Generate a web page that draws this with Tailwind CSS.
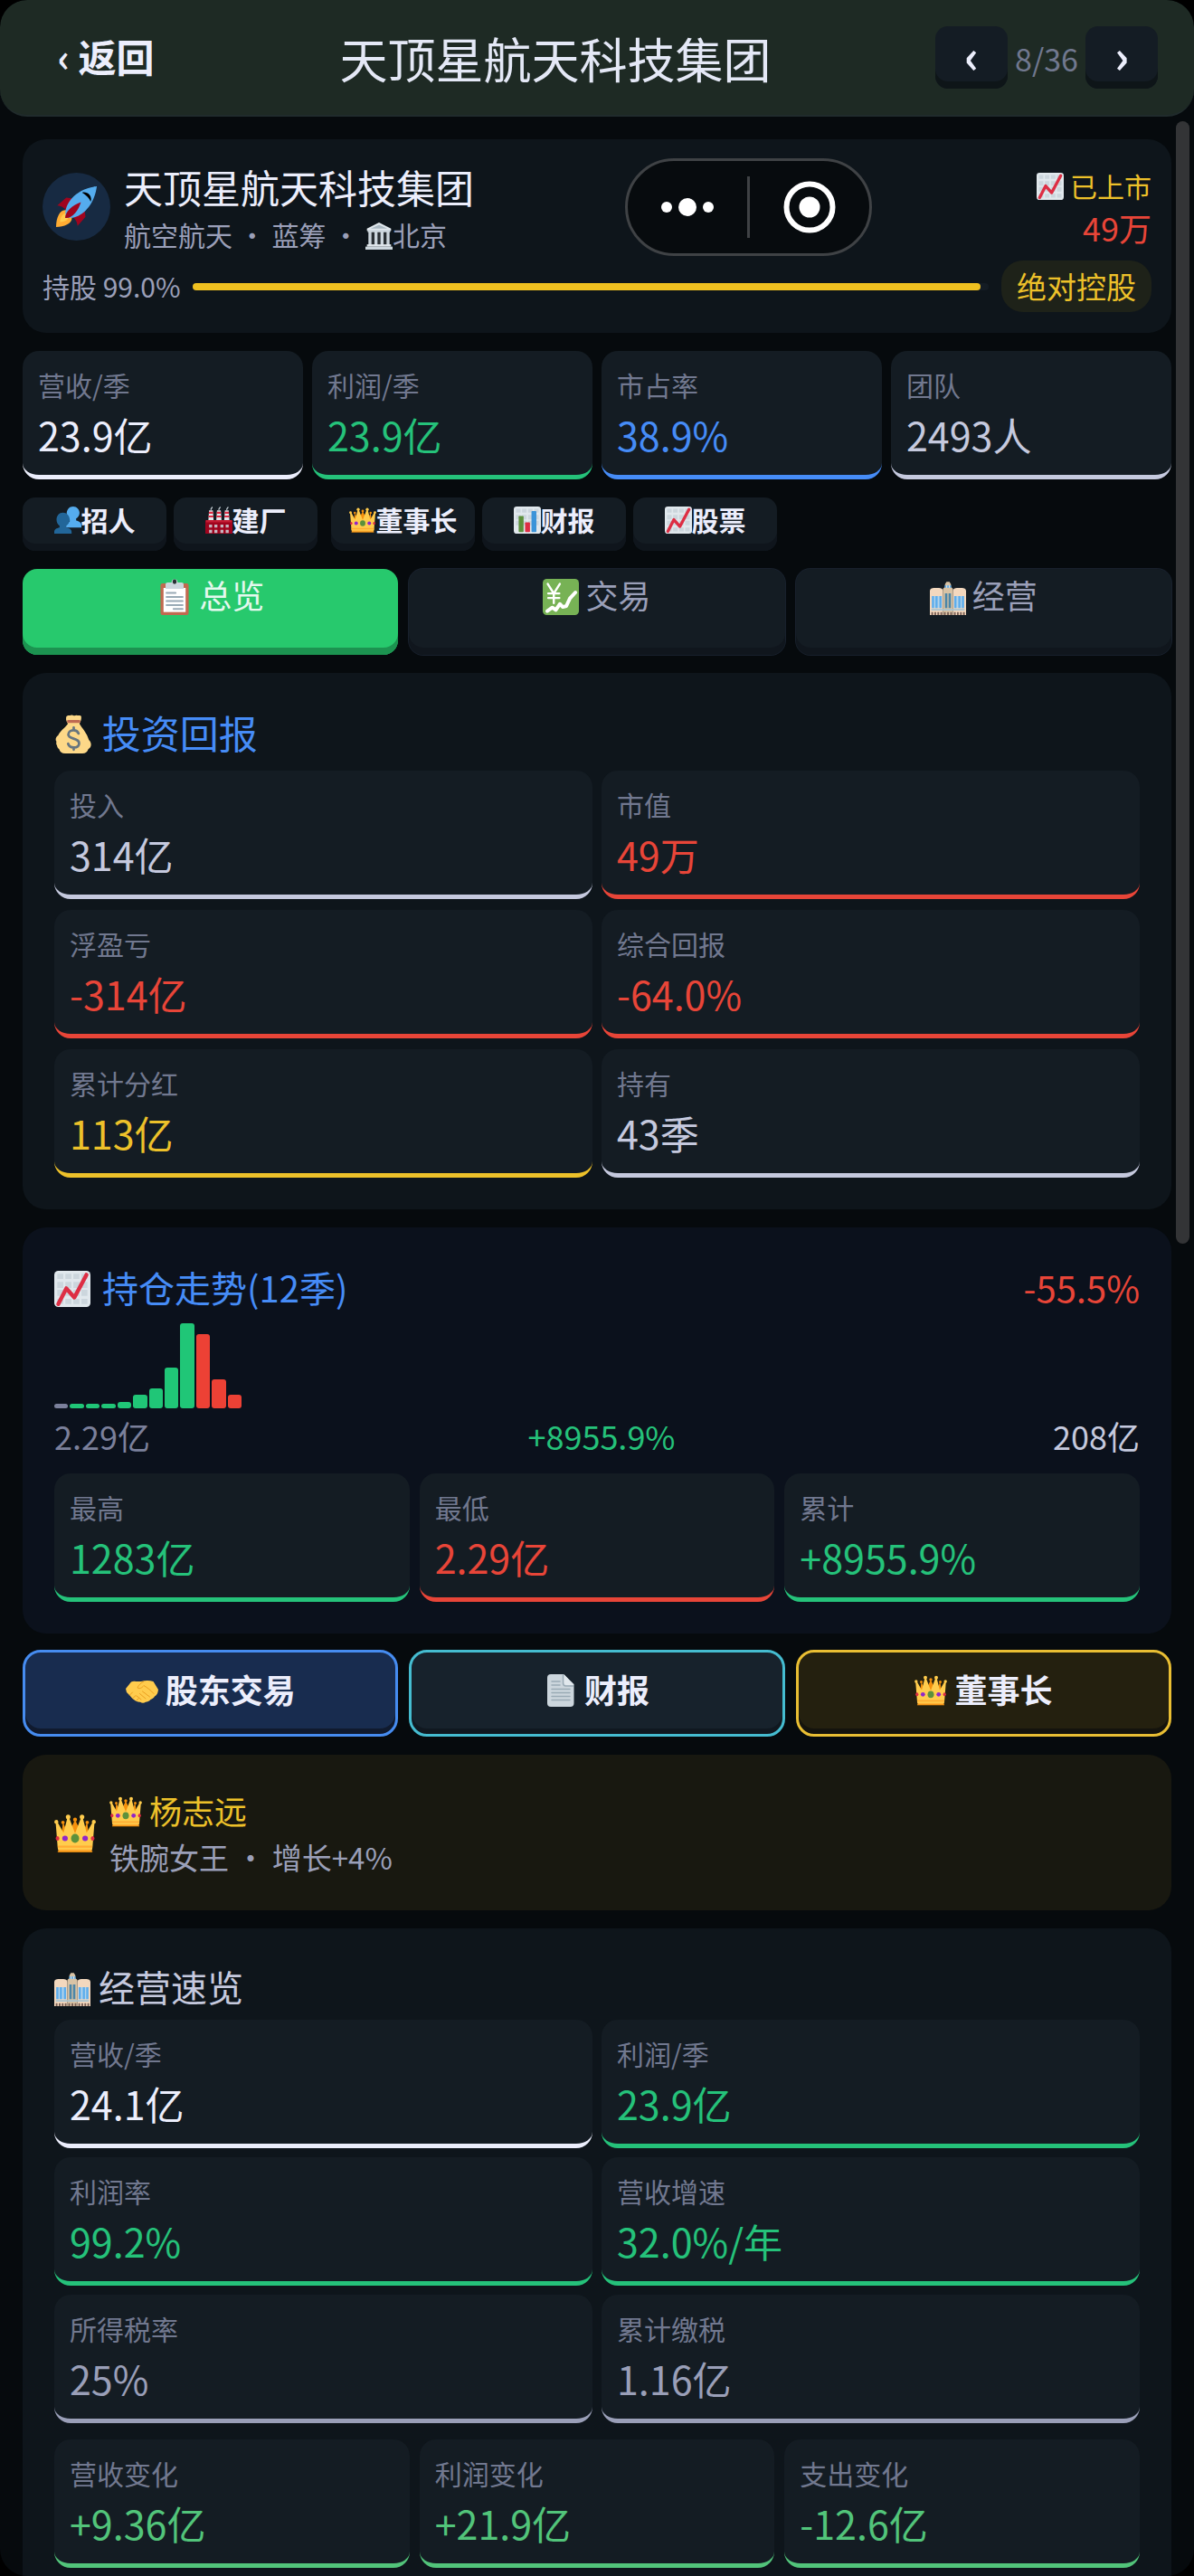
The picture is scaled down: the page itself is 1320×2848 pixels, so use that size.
<!DOCTYPE html>
<html lang="zh-CN">
<head>
  <meta charset="UTF-8">
  <meta name="viewport" content="width=device-width, initial-scale=1.0">
  <title>天顶星航天科技集团</title>
  <script src="https://cdn.jsdelivr.net/npm/@tailwindcss/browser@4"></script>
</head>
<body class="bg-black font-['Noto_Sans_CJK_SC',sans-serif] text-[#eceefc]">

  <!-- Icon sprite -->
  <svg class="hidden" aria-hidden="true">
    <symbol id="i-rocket" viewBox="0 0 36 36">
      <path fill="#A0041E" d="M1 17l8-7 8 1s1.500 3 .5 6c-1 3-6.500 7-8 5s-3.500-4.500-8.500-5zM19 35l7-8-1-8s-3-1.500-6-.5c-3 1-7 6.500-5 8s4.500 3.500 5 8.500z"/>
      <path fill="#FFAC33" d="M8 21c-5 0-8 7-8 15 7 0 14-3 14-8 0-4-2-7-6-7z"/>
      <path fill="#FFCC4D" d="M8.500 24c-2.500 0-5 3.500-5 7.500 3.500 0 7.500-1.500 7.500-4.500 0-2-1-3-2.500-3z"/>
      <path fill="#55ACEE" d="M36 0S23 1 14.500 10C10 15 7.500 20.500 8.500 25.500c.2 1 1 1.800 2 2C16 28.500 21 26 26 21.500 35 13 36 0 36 0z"/>
      <path fill="#000" d="M23 5.500c2-.8 5 .3 6.500 1.800S31.500 12 30.500 13.500C30 11 25.500 6.500 23 5.500z"/>
      <path fill="#A0041E" d="M8 28c0-5 6-11.500 14-14 -2 7-8 15-14 14z"/>
    </symbol>
    <symbol id="i-chart" viewBox="0 0 36 36">
      <rect width="36" height="36" rx="4" fill="#E1E8ED"/>
      <path fill="#CCD6DD" d="M3 3h6v5H3zM11 3h6v5h-6zM19 3h6v5h-6zM27 3h6v5h-6zM3 11h6v6H3zM11 11h6v6h-6zM19 11h6v6h-6zM27 11h6v6h-6zM3 19h6v6H3zM11 19h6v6h-6zM19 19h6v6h-6zM27 19h6v6h-6zM3 28h6v5H3zM11 28h6v5h-6zM19 28h6v5h-6zM27 28h6v5h-6z"/>
      <path fill="none" stroke="#DD2E44" stroke-width="4" stroke-linecap="round" stroke-linejoin="round" d="M4 33l8-15.500 8 9L32 4"/>
    </symbol>
    <symbol id="i-bars" viewBox="0 0 36 36">
      <rect width="36" height="36" rx="4" fill="#E1E8ED"/>
      <path fill="#CCD6DD" d="M3 3h6v5H3zM11 3h6v5h-6zM19 3h6v5h-6zM27 3h6v5h-6zM3 11h6v6H3zM11 11h6v6h-6zM19 11h6v6h-6zM27 11h6v6h-6zM3 19h6v6H3zM11 19h6v6h-6zM19 19h6v6h-6zM27 19h6v6h-6z"/>
      <rect x="6.500" y="12.500" width="6.500" height="21.500" rx="1" fill="#5C913B"/>
      <rect x="15" y="21" width="6.500" height="13" rx="1" fill="#DD2E44"/>
      <rect x="23.500" y="6" width="6.500" height="28" rx="1" fill="#3B94D9"/>
    </symbol>
    <symbol id="i-bank" viewBox="0 0 36 36">
      <path fill="#E1E8ED" d="M18 0l16 8v3H2V8z"/>
      <path fill="#AAB8C2" d="M18 3l11 5H7z"/>
      <path fill="#292F33" d="M4 11h28v19H4z"/>
      <path fill="#CCD6DD" d="M3 10h30v3H3zM4 13h4v17H4zM12 13h4v17h-4zM20 13h4v17h-4zM28 13h4v17h-4z"/>
      <path fill="#E1E8ED" d="M2 29h32v3H2z"/>
      <path fill="#CCD6DD" d="M0 32h36v4H0z"/>
    </symbol>
    <symbol id="i-people" viewBox="0 0 36 36">
      <path fill="#55ACEE" d="M25 0c-5 0-8.500 4-8.500 9.500 0 3.500 1.500 6.500 4 8v2.500c-3 1-5.500 2-5.500 5.500V28h21v-3c0-4-3-5.500-7-6.500v-2.500c2.500-1.500 4.500-4 4.500-7.500C33.500 4 30 0 25 0z"/>
      <path fill="#226699" d="M11.500 8C6.500 8 3 12 3 17.500c0 3.500 1.500 6.500 4 8V28c-4 1-7 2-7 6v2h23v-2c0-4-3-5-7-6v-2.500c2.500-1.500 4.500-4.500 4.500-8C20.500 12 16.500 8 11.500 8z"/>
    </symbol>
    <symbol id="i-factory" viewBox="0 0 36 36">
      <path fill="#E1E8ED" d="M5 5h5l1 14H4zM15.500 5h5l1 14h-7zM26 5h5l1 14h-7z"/>
      <path fill="#DD2E44" d="M4.800 7h5.400l.2 2.500H4.600zM15.300 7h5.400l.2 2.500h-5.800zM25.800 7h5.400l.2 2.500h-5.800zM4.400 12h6.200l.2 2.500H4.200zM14.900 12h6.200l.2 2.500h-6.600zM25.400 12h6.200l.2 2.500h-6.600z"/>
      <path fill="none" stroke="#CCD6DD" stroke-width="1.500" stroke-linecap="round" d="M7.500 4c0-2 1-1 1.500-3M18 4c0-2 1-1 1.500-3M28.500 4c0-2 1-1 1.500-3"/>
      <rect y="18" width="36" height="18" rx="1" fill="#A0041E"/>
      <path fill="#DD2E44" d="M1 18h34v3H1z" opacity=".6"/>
      <path fill="#CCD6DD" d="M5 24h4v4H5zM12 24h4v4h-4zM20 24h4v4h-4zM27 24h4v4h-4zM5 31h4v4H5zM12 31h4v4h-4zM20 31h4v4h-4zM27 31h4v4h-4z" opacity=".85"/>
    </symbol>
    <symbol id="i-crown" viewBox="0 0 36 36">
      <path fill="#F4900C" d="M6 22L7.500 8 12 19 18 6l6 13 4.500-11L30 22z"/>
      <circle cx="7.500" cy="8.500" r="1.500" fill="#F4900C"/><circle cx="18" cy="6" r="1.700" fill="#F4900C"/><circle cx="28.500" cy="8.500" r="1.500" fill="#F4900C"/>
      <path fill="#FFCC4D" d="M3 31L1.200 8.500l1.600-.3L8 17.500 11.500 4h1.200L18 18 23.300 4h1.200L28 17.500l5.200-9.300 1.600.3L33 31z"/>
      <circle cx="1.800" cy="8" r="1.700" fill="#FFCC4D"/><circle cx="12" cy="3.800" r="2" fill="#FFCC4D"/><circle cx="24" cy="3.800" r="2" fill="#FFCC4D"/><circle cx="34.200" cy="8" r="1.700" fill="#FFCC4D"/>
      <path fill="#FFAC33" d="M3 28.500h30l-.6 5.500H3.600z"/>
      <path fill="#FFCC4D" d="M3.200 30.300h29.600v1.600H3.200z"/>
      <path fill="#F4900C" d="M3 33.300h30v1H3z"/>
      <ellipse cx="18" cy="22.300" rx="3.500" ry="3.900" fill="#5C913B"/>
      <circle cx="9.300" cy="22.300" r="2.400" fill="#9126C9"/><circle cx="26.700" cy="22.300" r="2.400" fill="#9126C9"/>
      <ellipse cx="2.800" cy="22.300" rx="1.600" ry="2" fill="#DD2E44"/><ellipse cx="33.200" cy="22.300" rx="1.600" ry="2" fill="#DD2E44"/>
    </symbol>
    <symbol id="i-clipboard" viewBox="0 0 36 36">
      <rect x="4" y="4.500" width="28" height="31.500" rx="2" fill="#C1694F"/>
      <path fill="#fff" d="M7 9h22v24H7z"/>
      <path fill="#CCD6DD" d="M11 3.500h4a3 3 0 016 0h4a2 2 0 012 2V10H9V5.500a2 2 0 012-2z"/>
      <ellipse cx="18" cy="2.800" rx="2" ry="2.300" fill="#292F33"/>
      <path stroke="#99AAB5" stroke-width="1.800" stroke-linecap="round" d="M10 14h9M10 18h16M10 22h16M10 26h16M17 30h9"/>
    </symbol>
    <symbol id="i-yen" viewBox="0 0 36 36">
      <rect width="36" height="36" rx="4" fill="#77B255"/>
      <g fill="none" stroke="#fff" stroke-linecap="round" stroke-linejoin="round">
        <path stroke-width="2.200" d="M5 5l6 9.500L17 5M11 14.500V24M5.500 14.500h11M5.500 19h11"/>
        <path stroke-width="3.600" d="M4.500 32l5-3.500 3.500 2.500 4-6 3 3 3.500-1L27 19.500l5.500-6"/>
      </g>
    </symbol>
    <symbol id="i-building" viewBox="0 0 36 36">
      <path fill="#F3D8BE" d="M0 12c0-2 2-3 4-3h5c2 0 4 1 4 3v24H0zM23 12c0-2 2-3 4-3h5c2 0 4 1 4 3v24H23z"/>
      <path fill="#D9C3A5" d="M13 10l2-2V5.500L16.500 3h3L21 5.500V8l2 2v26H13z"/>
      <path fill="#5DADEC" d="M14.800 6.500h6.400V8.800h-6.400z"/>
      <path fill="#F3E7DA" d="M16.300 6.500h.9v2.300h-.9zM18.900 6.500h.9v2.300h-.9z"/>
      <path fill="#B5D4EA" d="M2 17h10v12H2zM24 17h10v12H24z"/>
      <path fill="#5DADEC" d="M2 17h2.200v12H2zM5.500 17h2.200v12H5.500zM9.500 17h2.200v12H9.500zM24.300 17h2.200v12h-2.200zM28.300 17h2.200v12h-2.200zM31.800 17H34v12h-2.200z"/>
      <path fill="#4C86A8" d="M15 14.500h2.400V29H15zM18.600 14.500H21V29h-2.400z"/>
      <path fill="#A9C3CF" d="M1.500 30h33v1.500h-33z"/>
      <path fill="#7A5F55" d="M1.500 33h1.700v3H1.500zM4.500 33h1.700v3H4.500zM7.500 33h1.700v3H7.500zM10.500 33h1.700v3h-1.700zM14 33h1.700v3H14zM17.200 33h1.700v3h-1.700zM20.300 33H22v3h-1.700zM24 33h1.700v3H24zM27 33h1.700v3H27zM30 33h1.700v3H30zM33 33h1.700v3H33z"/>
    </symbol>
    <symbol id="i-bag" viewBox="0 0 36 36">
      <path fill="#FDD888" d="M13 9c-1.500-2-2.500-4-2-6.500C11.500.5 13 1 14.500.8c1.200-.6 2-.6 3.200 0 1.400.6 2-.4 3.600 0 1.500.3 3-.4 3.700 1 .2 2.500-.5 5-2 7.200z"/>
      <path fill="#FDD888" d="M13 8h10c2.500 4.500 7.500 9.500 9 15.500 1.500 1 2.200 3.200 2 5-.3 1.800-1.500 3-2.500 3.500-.8 2.500-2.500 4-5.500 4H10c-3 0-4.800-1.500-5.500-4C3.500 31.500 2.500 30 2.500 28.500 1.500 28 2 25 2 25c-1.500-2 0-5 1.500-5.500C5 15.500 10.500 12 13 8z"/>
      <rect x="11.800" y="5" width="12.400" height="2.800" rx="1.200" fill="#BF6952"/>
      <path fill="none" stroke="#67757F" stroke-width="2.300" stroke-linecap="round" d="M22.500 17.500c-.8-2-2.500-3-4.500-3s-5 1.200-5 4c0 5 10 2.500 10 8 0 2.500-2 4-5 4s-4.500-1.300-5.200-3.500M18 12v2.500M18 30.500v2"/>
    </symbol>
    <symbol id="i-handshake" viewBox="0 0 36 36">
      <path fill="#FFCC4D" d="M0 16l6-7.500c3-1.500 6 0 11-.5 5-1.500 9-1.500 13.500 0L36 17c-.5 4-1.500 6-4 7.500-1 2-3 3-4.500 3.500-1.500 2-3.500 2.700-5.500 2.700-1.500 1.500-4.500 1.500-6 0C12 31.500 7 27 4.500 23.500L1 20z"/>
      <path fill="none" stroke="#E89A1C" stroke-width=".9" stroke-linecap="round" d="M20 8c-3 1.500-6 4-7 7 2.500 1.500 5 0 7-2.500 4 2.500 8 5.500 11 9M18.500 19l8 6M15.500 21.500l6.500 5.500M12 24l5 4M4.500 23l3-3M8 26.500l3-3M12 29l2.500-2.500"/>
    </symbol>
    <symbol id="i-page" viewBox="0 0 36 36">
      <path fill="#CCD6DD" d="M7 0h14l11.500 11v21a4 4 0 01-4 4H7a4 4 0 01-4-4V4a4 4 0 014-4z"/>
      <path fill="#E1E8ED" d="M21.500 0v9a3 3 0 003 3h8z"/>
      <path fill="none" stroke="#99AAB5" stroke-width="1.400" stroke-linecap="round" d="M20.500 1v9a3 3 0 003 3h8"/>
      <path stroke="#99AAB5" stroke-width="1.500" stroke-linecap="round" d="M8 8h9M8 12h9M8 16.500h20M8 20.500h20M8 24.500h20M8 28.500h20"/>
    </symbol>
  </svg>

  <div class="relative flex h-screen flex-col overflow-hidden rounded-[30px] bg-[#060a0d]">

    <!-- Header -->
    <header class="flex h-[129px] shrink-0 items-center rounded-[30px] border-b-2 border-[#202b2c] bg-[#1e2a24] px-10">
      <button class="w-[154px] pb-[5px] text-[42px] font-bold leading-[61px]">‹ 返回</button>
      <h1 class="flex-1 pt-[2px] text-center text-[53px] leading-[77px] text-[#e4e8f6]">天顶星航天科技集团</h1>
      <nav class="flex items-center gap-2">
        <button aria-label="上一家" class="h-[69px] w-20 rounded-[14px] bg-[#141c24] pb-2 text-[50px] font-bold leading-[61px] shadow-[inset_0_-8px_0_#0e1518]">‹</button>
        <span class="pt-[2px] text-[34px] leading-[50px] text-[#71788f]">8/36</span>
        <button aria-label="下一家" class="h-[69px] w-20 rounded-[14px] bg-[#141c24] pb-2 text-[50px] font-bold leading-[61px] shadow-[inset_0_-8px_0_#0e1518]">›</button>
      </nav>
    </header>

    <main class="flex flex-1 flex-col gap-5 px-[25px] pt-[25px]">

      <!-- Company card -->
      <section class="relative shrink-0 rounded-[26px] bg-[#0e151b] px-[22px] pb-[23px] pt-[22px]">
        <div class="flex items-center">
          <div class="flex size-[75px] items-center justify-center rounded-full bg-[#172a42]">
            <svg class="size-[45px]"><use href="#i-rocket"/></svg>
          </div>
          <div class="ml-[15px] flex-1">
            <h2 class="text-[43px] leading-[61px]">天顶星航天科技集团</h2>
            <p class="text-[30px] leading-[44px] text-[#9a9fb8]">航空航天 • 蓝筹 • <svg class="inline size-[1em] align-[-0.12em]"><use href="#i-bank"/></svg>北京</p>
          </div>
          <div class="text-right">
            <p class="text-[30px] leading-[44px] text-[#edc12a]"><svg class="inline size-[1em] align-[-0.12em]"><use href="#i-chart"/></svg> 已上市</p>
            <p class="text-[36px] leading-[48px] text-[#e84538]">49万</p>
          </div>
        </div>
        <div class="mt-[7px] flex items-center">
          <span class="text-[30px] leading-[43px] text-[#9a9fb8]">持股 99.0%</span>
          <div class="ml-[13px] mr-[14px] h-2 flex-1 rounded bg-[#141c24]">
            <div class="h-2 rounded bg-[#efc020]" style="width: 99%"></div>
          </div>
          <span class="rounded-[24px] bg-[#1e2219] px-[17px] text-[33px] leading-[57px] text-[#edc12a]">绝对控股</span>
        </div>

        <!-- Mini program capsule -->
        <div class="absolute left-[666px] top-[21px] flex h-[108px] w-[273px] items-center rounded-full border-3 border-[#3f4245] bg-[#070b0e]">
          <button aria-label="更多" class="flex flex-1 justify-center">
            <svg class="h-6 w-[60px]" viewBox="0 0 60 24" fill="#fff"><circle cx="7" cy="12" r="6"/><circle cx="30" cy="12" r="10"/><circle cx="53" cy="12" r="6"/></svg>
          </button>
          <div class="h-[68px] w-[3px] bg-[#3f4245]"></div>
          <button aria-label="关闭" class="flex flex-1 justify-center">
            <svg class="size-[58px]" viewBox="0 0 58 58"><circle cx="29" cy="29" r="25.500" fill="none" stroke="#fff" stroke-width="6"/><circle cx="29" cy="29" r="11.500" fill="#fff"/></svg>
          </button>
        </div>
      </section>

      <!-- Key figures -->
      <section class="grid shrink-0 grid-cols-4 gap-[10px]">
        <div class="rounded-[18px] border-b-5 border-[#eceefc] bg-[#141c23] px-[17px] pb-3 pt-4">
          <p class="text-[30px] leading-[43px] text-[#71788f]">营收/季</p>
          <p class="text-[43px] leading-[66px] text-[#eceefc]">23.9亿</p>
        </div>
        <div class="rounded-[18px] border-b-5 border-[#25c27a] bg-[#141c23] px-[17px] pb-3 pt-4">
          <p class="text-[30px] leading-[43px] text-[#71788f]">利润/季</p>
          <p class="text-[43px] leading-[66px] text-[#25c27a]">23.9亿</p>
        </div>
        <div class="rounded-[18px] border-b-5 border-[#468cf7] bg-[#141c23] px-[17px] pb-3 pt-4">
          <p class="text-[30px] leading-[43px] text-[#71788f]">市占率</p>
          <p class="text-[43px] leading-[66px] text-[#468cf7]">38.9%</p>
        </div>
        <div class="rounded-[18px] border-b-5 border-[#c5c9de] bg-[#141c23] px-[17px] pb-3 pt-4">
          <p class="text-[30px] leading-[43px] text-[#71788f]">团队</p>
          <p class="text-[43px] leading-[66px] text-[#c5c9de]">2493人</p>
        </div>
      </section>

      <!-- Quick actions -->
      <section class="flex shrink-0 gap-[15px]">
        <div class="flex gap-2">
          <button class="h-[59px] w-[159px] rounded-[14px] bg-[#141c23] pb-3 text-[30px] font-bold leading-[44px] shadow-[inset_0_-8px_0_#0f151c]"><svg class="inline size-[1em] align-[-0.12em]"><use href="#i-people"/></svg>招人</button>
          <button class="h-[59px] w-[159px] rounded-[14px] bg-[#141c23] pb-3 text-[30px] font-bold leading-[44px] shadow-[inset_0_-8px_0_#0f151c]"><svg class="inline size-[1em] align-[-0.12em]"><use href="#i-factory"/></svg>建厂</button>
        </div>
        <div class="flex gap-2">
          <button class="h-[59px] w-[159px] rounded-[14px] bg-[#141c23] pb-3 text-[30px] font-bold leading-[44px] shadow-[inset_0_-8px_0_#0f151c]"><svg class="inline size-[1em] align-[-0.12em]"><use href="#i-crown"/></svg>董事长</button>
          <button class="h-[59px] w-[159px] rounded-[14px] bg-[#141c23] pb-3 text-[30px] font-bold leading-[44px] shadow-[inset_0_-8px_0_#0f151c]"><svg class="inline size-[1em] align-[-0.12em]"><use href="#i-bars"/></svg>财报</button>
          <button class="h-[59px] w-[159px] rounded-[14px] bg-[#141c23] pb-3 text-[30px] font-bold leading-[44px] shadow-[inset_0_-8px_0_#0f151c]"><svg class="inline size-[1em] align-[-0.12em]"><use href="#i-chart"/></svg>股票</button>
        </div>
      </section>

      <!-- Tabs -->
      <div role="tablist" class="grid shrink-0 grid-cols-3 gap-3">
        <button role="tab" aria-selected="true" class="rounded-2xl bg-[#27c96d] pb-[44px] pt-2 text-[36px] leading-[40px] text-[#e4f8ee] shadow-[inset_0_-8px_0_#1c9350]"><svg class="mr-[7px] inline size-10 align-[-7px]"><use href="#i-clipboard"/></svg>总览</button>
        <button role="tab" aria-selected="false" class="rounded-2xl bg-[#141c23] pb-[44px] pt-2 text-[36px] leading-[40px] text-[#9a9fb8] shadow-[inset_0_-8px_0_#10161d] ring-1 ring-[#18202c]"><svg class="mr-[7px] inline size-10 align-[-7px]"><use href="#i-yen"/></svg>交易</button>
        <button role="tab" aria-selected="false" class="rounded-2xl bg-[#141c23] pb-[44px] pt-2 text-[36px] leading-[40px] text-[#9a9fb8] shadow-[inset_0_-8px_0_#10161d] ring-1 ring-[#18202c]"><svg class="mr-[7px] inline size-10 align-[-7px]"><use href="#i-building"/></svg>经营</button>
      </div>

      <!-- Return on investment -->
      <section class="shrink-0 rounded-[26px] bg-[#0e151b] p-[35px]">
        <h2 class="text-[43px] leading-[61px] text-[#468cf7]"><svg class="inline size-[1em] align-[-0.12em]"><use href="#i-bag"/></svg> 投资回报</h2>
        <div class="mt-3 grid grid-cols-2 gap-x-[10px] gap-y-3">
          <div class="rounded-[18px] border-b-5 border-[#c5c9de] bg-[#141c23] px-[17px] pb-3 pt-4">
            <p class="text-[30px] leading-[43px] text-[#71788f]">投入</p>
            <p class="text-[43px] leading-[66px] text-[#c5c9de]">314亿</p>
          </div>
          <div class="rounded-[18px] border-b-5 border-[#e84538] bg-[#141c23] px-[17px] pb-3 pt-4">
            <p class="text-[30px] leading-[43px] text-[#71788f]">市值</p>
            <p class="text-[43px] leading-[66px] text-[#e84538]">49万</p>
          </div>
          <div class="rounded-[18px] border-b-5 border-[#e84538] bg-[#141c23] px-[17px] pb-3 pt-4">
            <p class="text-[30px] leading-[43px] text-[#71788f]">浮盈亏</p>
            <p class="text-[43px] leading-[66px] text-[#e84538]">-314亿</p>
          </div>
          <div class="rounded-[18px] border-b-5 border-[#e84538] bg-[#141c23] px-[17px] pb-3 pt-4">
            <p class="text-[30px] leading-[43px] text-[#71788f]">综合回报</p>
            <p class="text-[43px] leading-[66px] text-[#e84538]">-64.0%</p>
          </div>
          <div class="rounded-[18px] border-b-5 border-[#edc12a] bg-[#141c23] px-[17px] pb-3 pt-4">
            <p class="text-[30px] leading-[43px] text-[#71788f]">累计分红</p>
            <p class="text-[43px] leading-[66px] text-[#edc12a]">113亿</p>
          </div>
          <div class="rounded-[18px] border-b-5 border-[#c5c9de] bg-[#141c23] px-[17px] pb-3 pt-4">
            <p class="text-[30px] leading-[43px] text-[#71788f]">持有</p>
            <p class="text-[43px] leading-[66px] text-[#c5c9de]">43季</p>
          </div>
        </div>
      </section>

      <!-- Holding trend -->
      <section class="shrink-0 rounded-[26px] bg-[#0b111c] p-[35px]">
        <div class="flex justify-between text-[40px] leading-[62px]">
          <h2 class="text-[#468cf7]"><svg class="mr-1 inline size-[1em] align-[-0.12em]"><use href="#i-chart"/></svg> 持仓走势(12季)</h2>
          <span class="text-[#e84538]">-55.5%</span>
        </div>
        <div class="mt-[9px] grid h-[94px] w-[207px] grid-cols-12 items-end gap-[2px]">
          <div class="rounded-[3px] bg-[#7b809b]" style="height: 5px"></div>
          <div class="rounded-[3px] bg-[#20c677]" style="height: 5px"></div>
          <div class="rounded-[3px] bg-[#20c677]" style="height: 5px"></div>
          <div class="rounded-[3px] bg-[#20c677]" style="height: 5px"></div>
          <div class="rounded-[3px] bg-[#20c677]" style="height: 7px"></div>
          <div class="rounded-[3px] bg-[#20c677]" style="height: 15px"></div>
          <div class="rounded-[3px] bg-[#20c677]" style="height: 22px"></div>
          <div class="rounded-[3px] bg-[#20c677]" style="height: 45px"></div>
          <div class="rounded-[3px] bg-[#20c677]" style="height: 94px"></div>
          <div class="rounded-[3px] bg-[#ed4135]" style="height: 82px"></div>
          <div class="rounded-[3px] bg-[#ed4135]" style="height: 32px"></div>
          <div class="rounded-[3px] bg-[#ed4135]" style="height: 15px"></div>
        </div>
        <div class="mt-1 flex justify-between text-[36px] leading-[52px]">
          <span class="text-[#7b809b]">2.29亿</span>
          <span class="text-[#25c27a]">+8955.9%</span>
          <span class="text-[#c5c9de]">208亿</span>
        </div>
        <div class="mt-4 grid grid-cols-3 gap-[11px]">
          <div class="rounded-[18px] border-b-5 border-[#25c27a] bg-[#141c23] px-[17px] pb-3 pt-4">
            <p class="text-[30px] leading-[43px] text-[#71788f]">最高</p>
            <p class="text-[43px] leading-[66px] text-[#25c27a]">1283亿</p>
          </div>
          <div class="rounded-[18px] border-b-5 border-[#e84538] bg-[#141c23] px-[17px] pb-3 pt-4">
            <p class="text-[30px] leading-[43px] text-[#71788f]">最低</p>
            <p class="text-[43px] leading-[66px] text-[#e84538]">2.29亿</p>
          </div>
          <div class="rounded-[18px] border-b-5 border-[#25c27a] bg-[#141c23] px-[17px] pb-3 pt-4">
            <p class="text-[30px] leading-[43px] text-[#71788f]">累计</p>
            <p class="text-[43px] leading-[66px] text-[#25c27a]">+8955.9%</p>
          </div>
        </div>
      </section>

      <!-- Main actions -->
      <section class="-mt-[2px] grid shrink-0 grid-cols-3 gap-3 text-[36px] font-bold leading-[52px]">
        <button class="h-24 rounded-[20px] border-3 border-[#468cf0] bg-[#182c4f] pb-[10px] shadow-[inset_0_-6px_0_#101a2e]"><svg class="inline size-[1em] align-[-0.12em]"><use href="#i-handshake"/></svg> 股东交易</button>
        <button class="h-24 rounded-[20px] border-3 border-[#45bcd0] bg-[#17222c] pb-[10px] shadow-[inset_0_-6px_0_#101820]"><svg class="inline size-[1em] align-[-0.12em]"><use href="#i-page"/></svg> 财报</button>
        <button class="h-24 rounded-[20px] border-3 border-[#e9be33] bg-[#24200f] pb-[10px] shadow-[inset_0_-6px_0_#14130d]"><svg class="inline size-[1em] align-[-0.12em]"><use href="#i-crown"/></svg> 董事长</button>
      </section>

      <!-- Chairman -->
      <section class="flex shrink-0 items-center gap-[15px] rounded-[26px] bg-[#181810] px-[35px] pb-[33px] pt-[35px]">
        <svg class="size-[46px]"><use href="#i-crown"/></svg>
        <div>
          <p class="text-[36px] leading-[52px] text-[#edc12a]"><svg class="inline size-[1em] align-[-0.12em]"><use href="#i-crown"/></svg> 杨志远</p>
          <p class="text-[33px] leading-[52px] text-[#9a9fb8]">铁腕女王 • 增长+4%</p>
        </div>
      </section>

      <!-- Operations -->
      <section class="shrink-0 rounded-[26px] bg-[#0e151b] p-[35px]">
        <h2 class="text-[40px] leading-[58px] text-[#c5c9de]"><svg class="inline size-[1em] align-[-0.12em]"><use href="#i-building"/></svg> 经营速览</h2>
        <div class="mt-2 grid grid-cols-2 gap-[10px]">
          <div class="rounded-[18px] border-b-5 border-[#eceefc] bg-[#141c23] px-[17px] pb-3 pt-4">
            <p class="text-[30px] leading-[43px] text-[#71788f]">营收/季</p>
            <p class="text-[43px] leading-[66px] text-[#eceefc]">24.1亿</p>
          </div>
          <div class="rounded-[18px] border-b-5 border-[#25c27a] bg-[#141c23] px-[17px] pb-3 pt-4">
            <p class="text-[30px] leading-[43px] text-[#71788f]">利润/季</p>
            <p class="text-[43px] leading-[66px] text-[#25c27a]">23.9亿</p>
          </div>
          <div class="rounded-[18px] border-b-5 border-[#25c27a] bg-[#141c23] px-[17px] pb-3 pt-4">
            <p class="text-[30px] leading-[43px] text-[#71788f]">利润率</p>
            <p class="text-[43px] leading-[66px] text-[#25c27a]">99.2%</p>
          </div>
          <div class="rounded-[18px] border-b-5 border-[#25c27a] bg-[#141c23] px-[17px] pb-3 pt-4">
            <p class="text-[30px] leading-[43px] text-[#71788f]">营收增速</p>
            <p class="text-[43px] leading-[66px] text-[#25c27a]">32.0%/年</p>
          </div>
          <div class="rounded-[18px] border-b-5 border-[#9a9fb8] bg-[#141c23] px-[17px] pb-3 pt-4">
            <p class="text-[30px] leading-[43px] text-[#71788f]">所得税率</p>
            <p class="text-[43px] leading-[66px] text-[#9a9fb8]">25%</p>
          </div>
          <div class="rounded-[18px] border-b-5 border-[#9a9fb8] bg-[#141c23] px-[17px] pb-3 pt-4">
            <p class="text-[30px] leading-[43px] text-[#71788f]">累计缴税</p>
            <p class="text-[43px] leading-[66px] text-[#9a9fb8]">1.16亿</p>
          </div>
        </div>
        <div class="mt-[18px] grid grid-cols-3 gap-[11px]">
          <div class="rounded-[18px] border-b-5 border-[#52c47a] bg-[#141c23] px-[17px] pb-3 pt-4">
            <p class="text-[30px] leading-[43px] text-[#71788f]">营收变化</p>
            <p class="text-[43px] leading-[66px] text-[#52c47a]">+9.36亿</p>
          </div>
          <div class="rounded-[18px] border-b-5 border-[#52c47a] bg-[#141c23] px-[17px] pb-3 pt-4">
            <p class="text-[30px] leading-[43px] text-[#71788f]">利润变化</p>
            <p class="text-[43px] leading-[66px] text-[#52c47a]">+21.9亿</p>
          </div>
          <div class="rounded-[18px] border-b-5 border-[#52c47a] bg-[#141c23] px-[17px] pb-3 pt-4">
            <p class="text-[30px] leading-[43px] text-[#71788f]">支出变化</p>
            <p class="text-[43px] leading-[66px] text-[#52c47a]">-12.6亿</p>
          </div>
        </div>
      </section>
    </main>

    <!-- Scroll thumb -->
    <div class="absolute right-[5px] top-[134px] h-[1241px] w-[15px] rounded-full bg-[#333436]"></div>
  </div>
</body>
</html>
